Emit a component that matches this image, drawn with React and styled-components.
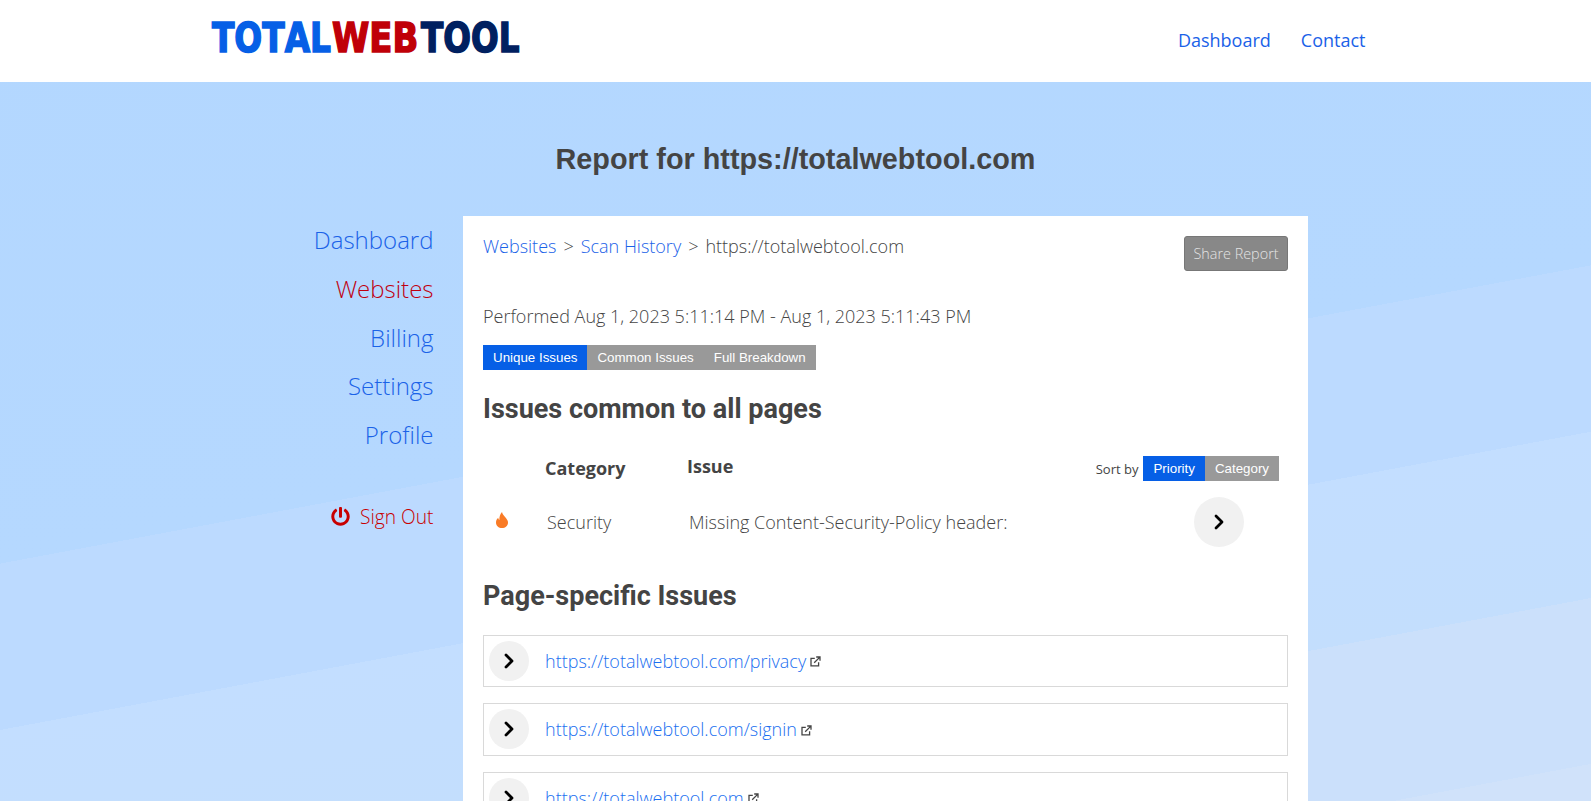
import React from 'react';
import styled, { createGlobalStyle } from 'styled-components';
import { FaPowerOff } from 'react-icons/fa';

const Global = createGlobalStyle`
  html, body { margin: 0; padding: 0; height: 100%; overflow: hidden; }
  body { font-family: "Open Sans", "Liberation Sans", sans-serif; color: #444; }
  * { box-sizing: border-box; }
`;

const Page = styled.div`
  height: 100vh;
  overflow: hidden;
  background: linear-gradient(169.38deg,
    #b3d7ff 0, #b5d8ff 554px,
    #bcdaff 554px, #bcdaff 717.5px,
    #c3deff 717.5px, #c3defd 881px,
    #cbe0fb 881px, #cbe0fb 1044px,
    #d0e2fa 1044px);
`;

const Header = styled.header`
  height: 82px;
  background: #fff;
  display: flex;
  align-items: center;
  justify-content: space-between;
  padding: 0 225.5px 0 212px;
`;

const Logo = styled.div`
  display: flex;
  width: 309px;
  height: 32px;
  margin-top: -6px;
  font-family: "DejaVu Sans", "Liberation Sans", sans-serif;
  font-weight: 700;
  font-size: 41px;
  line-height: 32px;
  font-kerning: none;
`;

const LogoWord = styled.span`
  flex: none;
  width: ${p => p.$w}px;
  margin-right: ${p => p.$gap || 0}px;
  white-space: nowrap;
  color: ${p => p.$color};
  -webkit-text-stroke: 1.6px ${p => p.$color};
  transform: scaleX(${p => p.$sx});
  transform-origin: left center;
`;

const TopNav = styled.nav`
  display: flex;
  gap: 30px;
`;

const TopLink = styled.a`
  font-size: 18px;
  line-height: 24px;
  color: #1a62e8;
  margin-top: -2px;
`;

const Title = styled.h1`
  margin: 0;
  padding-top: 57px;
  height: 134px;
  text-align: center;
  font-family: "Liberation Sans", Arial, sans-serif;
  font-weight: 700;
  font-size: 28.8px;
  line-height: 40px;
  color: #444;
`;

const Layout = styled.div`
  display: grid;
  grid-template-columns: 432px 845px;
  column-gap: 31px;
`;

const Sidebar = styled.aside`
  display: flex;
  flex-direction: column;
  align-items: flex-end;
  margin-right: -1.5px;
`;

const SideLink = styled.a`
  font-weight: 300;
  font-size: 24px;
  line-height: 48.75px;
  color: ${p => (p.$active ? '#c00010' : '#1a62e8')};
`;

const SignOut = styled.a`
  display: flex;
  align-items: center;
  gap: 10px;
  margin-top: 42px;
  font-weight: 300;
  font-size: 19.2px;
  line-height: 30px;
  color: #c80000;
  svg { font-size: 19px; }
`;

const Panel = styled.main`
  background: #fff;
  height: 600px;
  padding: 20px;
`;

const TopRow = styled.div`
  display: flex;
  justify-content: space-between;
  align-items: flex-start;
  height: 35px;
`;

const Crumbs = styled.div`
  display: flex;
  gap: 7px;
  font-weight: 300;
  font-size: 18px;
  line-height: 24px;
  margin-top: -2px;
`;

const CrumbLink = styled.a`
  color: #1a62e8;
`;

const CrumbSep = styled.span`
  color: #444;
`;

const ShareButton = styled.button`
  width: 104px;
  height: 35px;
  padding: 0;
  background: #888;
  border: 1px solid #777;
  border-radius: 3px;
  color: #e4e4e4;
  font-family: "Open Sans", sans-serif;
  font-weight: 300;
  font-size: 14.4px;
`;

const Performed = styled.p`
  margin: 33px 0 0;
  font-weight: 300;
  font-size: 18px;
  line-height: 24px;
`;

const Segments = styled.div`
  display: flex;
  margin-top: ${p => p.$top || 0}px;
`;

const Segment = styled.button`
  height: 25px;
  padding: 0 10px;
  border: 0;
  background: ${p => (p.$on ? '#065fe6' : '#999')};
  color: #fff;
  font-family: "Liberation Sans", Arial, sans-serif;
  font-size: 13.33px;
  line-height: 25px;
`;

const Heading = styled.h2`
  margin: ${p => p.$top}px 0 0;
  font-family: Roboto, sans-serif;
  font-weight: 700;
  font-size: 27px;
  line-height: 34px;
  color: #444;
`;

const TableRow = styled.div`
  display: grid;
  grid-template-columns: 62px 142px 1fr auto;
  align-items: center;
`;

const TableHead = styled(TableRow)`
  margin-top: 30px;
  height: 25px;
`;

const HeadCell = styled.span`
  font-weight: 700;
  font-size: 18px;
  line-height: 24px;
  margin-top: ${p => (p.$up ? -5 : -2)}px;
`;

const SortBox = styled.div`
  display: flex;
  align-items: center;
  gap: 5px;
  margin-right: 9px;
`;

const SortLabel = styled.span`
  font-size: 13px;
  color: #444;
`;

const IssueRow = styled(TableRow)`
  margin-top: 16px;
  height: 50px;
  padding-right: 44px;
`;

const FlameCell = styled.span`
  padding-left: 13px;
  display: flex;
  margin-top: -4px;
`;

const BodyCell = styled.span`
  font-weight: 300;
  font-size: 18px;
  line-height: 24px;
  padding-left: 2px;
`;

const Round = styled.button`
  width: ${p => p.$size}px;
  height: ${p => p.$size}px;
  border: 0;
  padding: 0;
  border-radius: 50%;
  background: #f1f1f1;
  display: flex;
  align-items: center;
  justify-content: center;
  flex: none;
`;

const PageList = styled.div`
  display: flex;
  flex-direction: column;
  gap: 16px;
  margin-top: 21.6px;
`;

const PageRow = styled.div`
  display: flex;
  align-items: center;
  gap: 16px;
  height: 52.5px;
  padding: 0 5px;
  border: 1px solid #d9d9d9;
`;

const PageLink = styled.a`
  display: flex;
  align-items: center;
  gap: 4px;
  font-weight: 300;
  font-size: 18px;
  line-height: 24px;
  color: #1a6ff0;
  svg { margin-top: 2px; }
`;

const Chevron = () => (
  <svg width="10" height="16" viewBox="0 0 10 16" fill="none" stroke="#000" strokeWidth="2.8" strokeLinecap="round" strokeLinejoin="round">
    <path d="M2 2l6 6-6 6" />
  </svg>
);

const External = () => (
  <svg width="11" height="11" viewBox="0 0 11 11" fill="none" stroke="#444" strokeWidth="1.3">
    <path d="M8.6 6.2V9.8H1V2.4H4.8" />
    <path d="M4.2 6.8L9.6 1.4M6.2 1H10V4.8" />
  </svg>
);

const Flame = () => (
  <svg width="12" height="16" viewBox="0 0 12 16" fill="#f97b26">
    <path d="M6 0c.5 2.6 2.2 3.8 3.5 5.6C10.8 7.2 12 8.8 12 10.4 12 13.5 9.3 16 6 16S0 13.5 0 10.4C0 8.6.9 7 2.2 5.8 2.4 7 2.8 7.6 3.4 8 3.2 5 4 2 6 0z" />
  </svg>
);

const rows = ['https://totalwebtool.com/privacy', 'https://totalwebtool.com/signin', 'https://totalwebtool.com'];

export default function App() {
  return (
    <Page>
      <Global />
      <Header>
        <Logo>
          <LogoWord $w={120} $sx={0.8} $color="#065fe6">TOTAL</LogoWord>
          <LogoWord $w={87} $gap={2} $sx={0.825} $color="#c00008">WEB</LogoWord>
          <LogoWord $w={99} $sx={0.795} $color="#002060">TOOL</LogoWord>
        </Logo>
        <TopNav>
          <TopLink>Dashboard</TopLink>
          <TopLink>Contact</TopLink>
        </TopNav>
      </Header>
      <Title>Report for https://totalwebtool.com</Title>
      <Layout>
        <Sidebar>
          <SideLink>Dashboard</SideLink>
          <SideLink $active>Websites</SideLink>
          <SideLink>Billing</SideLink>
          <SideLink>Settings</SideLink>
          <SideLink>Profile</SideLink>
          <SignOut><FaPowerOff />Sign Out</SignOut>
        </Sidebar>
        <Panel>
          <TopRow>
            <Crumbs>
              <CrumbLink>Websites</CrumbLink>
              <CrumbSep>&gt;</CrumbSep>
              <CrumbLink>Scan History</CrumbLink>
              <CrumbSep>&gt;</CrumbSep>
              <span>https://totalwebtool.com</span>
            </Crumbs>
            <ShareButton>Share Report</ShareButton>
          </TopRow>
          <Performed>Performed Aug 1, 2023 5:11:14 PM - Aug 1, 2023 5:11:43 PM</Performed>
          <Segments $top={17}>
            <Segment $on>Unique Issues</Segment>
            <Segment>Common Issues</Segment>
            <Segment>Full Breakdown</Segment>
          </Segments>
          <Heading $top={22}>Issues common to all pages</Heading>
          <TableHead>
            <span />
            <HeadCell>Category</HeadCell>
            <HeadCell $up>Issue</HeadCell>
            <SortBox>
              <SortLabel>Sort by</SortLabel>
              <Segments>
                <Segment $on>Priority</Segment>
                <Segment>Category</Segment>
              </Segments>
            </SortBox>
          </TableHead>
          <IssueRow>
            <FlameCell><Flame /></FlameCell>
            <BodyCell>Security</BodyCell>
            <BodyCell>Missing Content-Security-Policy header:</BodyCell>
            <Round $size={50}><Chevron /></Round>
          </IssueRow>
          <Heading $top={32}>Page-specific Issues</Heading>
          <PageList>
            {rows.map(u => (
              <PageRow key={u}>
                <Round $size={40}><Chevron /></Round>
                <PageLink>{u}<External /></PageLink>
              </PageRow>
            ))}
          </PageList>
        </Panel>
      </Layout>
    </Page>
  );
}
